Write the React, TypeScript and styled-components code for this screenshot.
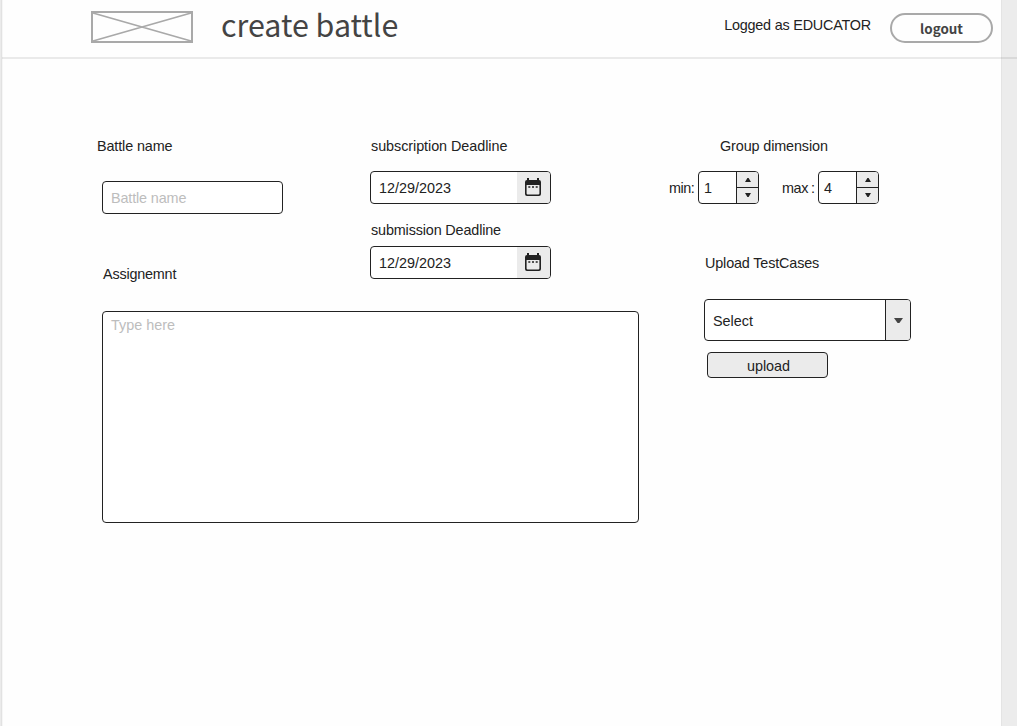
import React from "react";
import styled, { createGlobalStyle } from "styled-components";

const ink = "#222";
const fill = "#ebebeb";

const GlobalStyle = createGlobalStyle`
  * { box-sizing: border-box; }
  body { margin: 0; background: #fff; }
`;

const Page = styled.div`
  display: flex;
  flex-direction: column;
  width: 1017px;
  height: 726px;
  overflow: hidden;
  color: ${ink};
  font: 14.4px/16px "Liberation Sans", Arial, sans-serif;
  background: linear-gradient(to right, #ebebeb 0 1px, #e2e2e2 1px 2px, #f6f6f6 2px 3px, #fefefe 3px 1001px, #e4e4e4 1001px 1002px, #ececec 1002px);
`;

const Header = styled.header`
  display: flex;
  align-items: flex-start;
  height: 59px;
  margin-left: 2px;
  padding: 11px 24px 0 89px;
  border-bottom: 2px solid rgba(0, 0, 0, 0.08);
`;

const Title = styled.h1`
  margin: -6px 0 0 28px;
  flex: 1;
  font: 400 30.4px/38px "Noto Sans CJK SC", sans-serif;
  color: #444;
`;

const Status = styled.span`
  margin: 6px 19px 0 0;
  letter-spacing: -0.21px;
`;

const LogoutButton = styled.button`
  width: 103px;
  height: 30px;
  margin-top: 2px;
  padding: 0;
  border: 2px solid #a9a9a9;
  border-radius: 15px;
  background: #fefefe;
  color: #444;
  font: 700 13.4px/24px "Noto Sans CJK SC", sans-serif;
`;

const Body = styled.main`
  display: flex;
  padding: 79px 0 0 97px;
`;

const Details = styled.section`
  width: 572px;
`;

const Columns = styled.div`
  display: flex;
`;

const Column = styled.div<{ $width?: number }>`
  display: flex;
  flex-direction: column;
  align-items: flex-start;
  width: ${(p) => (p.$width ? `${p.$width}px` : "auto")};
`;

const Label = styled.label<{ $top?: number; $left?: number; $spacing?: number }>`
  margin: ${(p) => p.$top ?? 0}px 0 0 ${(p) => p.$left ?? 0}px;
  height: 16px;
  white-space: nowrap;
  letter-spacing: ${(p) => p.$spacing ?? -0.12}px;
`;

const fieldBorder = `
  border: 1px solid ${ink};
  border-radius: 4px;
`;

const TextInput = styled.input`
  ${fieldBorder}
  width: 181px;
  height: 33px;
  margin: 27px 0 0 5px;
  padding: 1px 8px 0;
  background: #fff;
  font: inherit;
  letter-spacing: -0.14px;
  &::placeholder { color: #bdbdbd; opacity: 1; }
`;

const TextArea = styled.textarea`
  ${fieldBorder}
  display: block;
  width: 537px;
  height: 212px;
  margin: 29px 0 0 5px;
  padding: 5px 8px;
  background: #fff;
  font: inherit;
  resize: none;
  &::placeholder { color: #bdbdbd; opacity: 1; }
`;

const Field = styled.div<{ $width: number; $height: number; $top?: number }>`
  ${fieldBorder}
  display: flex;
  width: ${(p) => p.$width}px;
  height: ${(p) => p.$height}px;
  margin-top: ${(p) => p.$top ?? 0}px;
  overflow: hidden;
  background: #fff;
`;

const Value = styled.span<{ $pad: number; $top?: number }>`
  flex: 1;
  display: flex;
  align-items: center;
  padding: ${(p) => p.$top ?? 0}px 0 0 ${(p) => p.$pad}px;
`;

const Addon = styled.span<{ $width: number; $line?: boolean }>`
  display: flex;
  align-items: center;
  justify-content: center;
  width: ${(p) => p.$width}px;
  padding: ${(p) => (p.$line ? "0" : "0 2px 1px 0")};
  border-left: ${(p) => (p.$line ? `1px solid ${ink}` : "none")};
  background: ${fill};
`;

const Steps = styled.span`
  display: grid;
  grid-template-rows: 15px 16px;
  width: 22px;
  border-left: 1px solid ${ink};
  background: ${fill};
`;

const Step = styled.span`
  display: flex;
  align-items: center;
  justify-content: center;
  padding-top: 1px;
  & + & { padding: 0 0 1px; border-top: 1px solid ${ink}; }
`;

const GroupRow = styled.div`
  display: flex;
  margin-top: 17px;
`;

const RangeLabel = styled.span<{ $width: number; $spacing: number; $gap?: number }>`
  width: ${(p) => p.$width}px;
  padding-top: 9px;
  white-space: pre;
  letter-spacing: ${(p) => p.$spacing}px;
  word-spacing: ${(p) => p.$gap ?? 0}px;
`;

const Gap = styled.span`
  width: 23px;
`;

const Uploads = styled.div`
  display: flex;
  flex-direction: column;
  padding: 51px 0 0 35px;
`;

const UploadButton = styled.button`
  ${fieldBorder}
  width: 121px;
  height: 26px;
  margin: 11px 0 0 3px;
  padding: 2px 0 0 2px;
  background: ${fill};
  color: ${ink};
  font: inherit;
`;

const LogoPlaceholder = () => (
  <svg width="102" height="32" viewBox="0 0 102 32" fill="none" stroke="#a9a9a9">
    <path d="M2 2L100 30M100 2L2 30" strokeWidth="1.8" />
    <rect x="1" y="1" width="100" height="30" strokeWidth="2" />
  </svg>
);

const CalendarIcon = () => (
  <svg width="16" height="18" viewBox="0 0 16 18">
    <path
      fill={ink}
      fillRule="evenodd"
      d="M2 0h2v2h8V0h2v2q2 0 2 2v12q0 2-2 2H2q-2 0-2-2V4q0-2 2-2zM1.6 7v8.6q0 .8.8.8h11.2q.8 0 .8-.8V7z"
    />
    <path fill={ink} d="M3.3 8.2h2v1.6h-2zM7 8.2h2v1.6H7zM10.7 8.2h2v1.6h-2z" />
  </svg>
);

const Triangle = ({ up, width = 6, height = 4, color = ink }: { up?: boolean; width?: number; height?: number; color?: string }) => (
  <svg width={width} height={height} viewBox="0 0 10 6" preserveAspectRatio="none">
    <path fill={color} d={up ? "M0 6L4 0H6L10 6z" : "M0 0H10L6 6H4z"} />
  </svg>
);

const DateField = ({ top }: { top: number }) => (
  <Field $width={181} $height={33} $top={top}>
    <Value $pad={8}>12/29/2023</Value>
    <Addon $width={33}><CalendarIcon /></Addon>
  </Field>
);

const Stepper = ({ value }: { value: number }) => (
  <Field $width={61} $height={33}>
    <Value $pad={5}>{value}</Value>
    <Steps>
      <Step><Triangle up /></Step>
      <Step><Triangle /></Step>
    </Steps>
  </Field>
);

export default function App() {
  return (
    <Page>
      <GlobalStyle />
      <Header>
        <LogoPlaceholder />
        <Title>create battle</Title>
        <Status>Logged as EDUCATOR</Status>
        <LogoutButton>logout</LogoutButton>
      </Header>
      <Body>
        <Details>
          <Columns>
            <Column $width={273}>
              <Label>Battle name</Label>
              <TextInput placeholder="Battle name" />
              <Label $top={52} $left={6} $spacing={-0.2}>Assignemnt</Label>
            </Column>
            <Column>
              <Label $left={1} $spacing={-0.06}>subscription Deadline</Label>
              <DateField top={17} />
              <Label $top={18} $left={1} $spacing={-0.15}>submission Deadline</Label>
              <DateField top={8} />
            </Column>
          </Columns>
          <TextArea placeholder="Type here" />
        </Details>
        <Column>
          <Label $left={51}>Group dimension</Label>
          <GroupRow>
            <RangeLabel $width={29} $spacing={-0.45}>min:</RangeLabel>
            <Stepper value={1} />
            <Gap />
            <RangeLabel $width={36} $spacing={-0.4} $gap={-0.5}>max :</RangeLabel>
            <Stepper value={4} />
          </GroupRow>
          <Uploads>
            <Label $left={1} $spacing={-0.15}>Upload TestCases</Label>
            <Field $width={207} $height={42} $top={28}>
              <Value $pad={8} $top={2}>Select</Value>
              <Addon $width={25} $line><Triangle width={9} height={5} color="#444" /></Addon>
            </Field>
            <UploadButton>upload</UploadButton>
          </Uploads>
        </Column>
      </Body>
    </Page>
  );
}
